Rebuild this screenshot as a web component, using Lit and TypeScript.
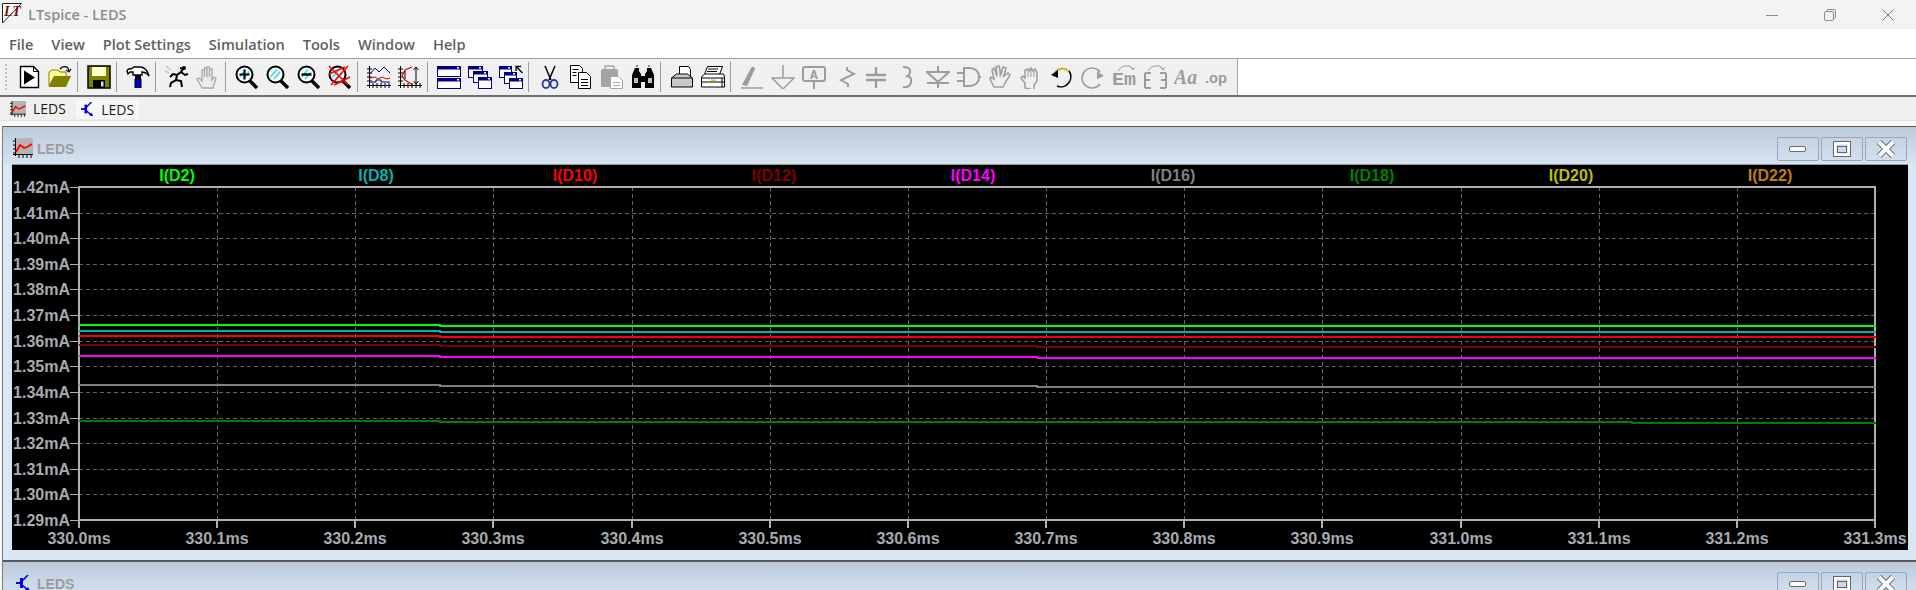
/**
 * <app-root> — LTspice main window with the LEDS waveform viewer.
 */

import { LitElement, html, svg, css } from "lit";
import { customElement } from "lit/decorators.js";

/* ── Plot data ───────────────────────────────────────────────────────── */

const PLOT = { left: 79, right: 1875, top: 187, bottom: 520 };
const Y_LABELS = ["1.42", "1.41", "1.40", "1.39", "1.38", "1.37", "1.36", "1.35", "1.34", "1.33", "1.32", "1.31", "1.30", "1.29"];
const X_LABELS = ["330.0", "330.1", "330.2", "330.3", "330.4", "330.5", "330.6", "330.7", "330.8", "330.9", "331.0", "331.1", "331.2", "331.3"];

// [x where the step happens, y after it], starting from the y at the left edge
const TRACES = [
  { name: "I(D2)", x: 177, color: "#00ff00", y: 325, steps: [[440, 326]] },
  { name: "I(D8)", x: 376, color: "#00b4b4", y: 331, steps: [[440, 332]] },
  { name: "I(D10)", x: 575, color: "#ff0000", y: 336, steps: [[440, 337]] },
  { name: "I(D12)", x: 774, color: "#800000", y: 345, steps: [[440, 346], [1037, 347]] },
  { name: "I(D14)", x: 973, color: "#ff00ff", y: 356, steps: [[440, 357], [1037, 358]] },
  { name: "I(D16)", x: 1173, color: "#808080", y: 385, steps: [[440, 386], [1037, 387]] },
  { name: "I(D18)", x: 1372, color: "#008000", y: 421, steps: [[440, 422], [1632, 423]] },
  { name: "I(D20)", x: 1571, color: "#bfbf00", y: 0, steps: [] },
  { name: "I(D22)", x: 1770, color: "#bf8000", y: 0, steps: [] },
];

function tracePath(y: number, steps: number[][]): string {
  let d = `M${PLOT.left} ${y}`;
  for (const [sx, sy] of steps) d += `H${sx}V${sy}`;
  return `${d}H${PLOT.right + 1}`;
}

function xTick(i: number): number {
  return Math.round(PLOT.left + (i * (PLOT.right - PLOT.left)) / 13);
}

function yTick(i: number): number {
  return Math.round(PLOT.top + (i * (PLOT.bottom - PLOT.top)) / 13);
}

/* ── Toolbar icons ───────────────────────────────────────────────────── */

const GREY = "#9c9c9c";

function lens(inner: unknown = null) {
  return svg`
    <path d="M14 15l8 8" stroke="#000" stroke-width="3.4"/>
    <circle cx="9.5" cy="9.5" r="8" fill="#fff" stroke="#000" stroke-width="2"/>
    <path d="M4.5 12L11 4.5M8 14l6-7" stroke="#5fe0e8" stroke-width="2"/>
    ${inner}`;
}

function win(x: number, y: number, w: number, h: number) {
  return svg`
    <rect x=${x + 0.5} y=${y + 0.5} width=${w} height=${h} fill="#fff" stroke="#000080"/>
    <rect x=${x} y=${y} width=${w + 1} height="3.5" fill="#000080"/>
    <rect x=${x + w - 3} y=${y + 1} width="2" height="1.5" fill="#fff"/>`;
}

const axes = svg`
  <path d="M2.5 1v22M0 20.5h24M0 4h5M0 8h5M0 12h5M0 16h5M6 18v5M10 18v5M14 18v5M18 18v5M22 18v5" stroke="#000" fill="none"/>`;

const ICONS: Record<string, unknown> = {
  play: svg`
    <path d="M3.5 1.5h13l5 5v16h-18z" fill="#fff" stroke="#000" stroke-width="1.4"/>
    <path d="M16.5 1.5v5h5" fill="none" stroke="#000"/>
    <path d="M7 5.5l11 7-11 7z" fill="#000"/>`,
  open: svg`
    <path d="M1 21V7l3-2h6l2 2h6v5H6z" fill="#ffff90" stroke="#808000"/>
    <path d="M1 22l5-11h17l-5 11z" fill="#808000"/>
    <path d="M12 4q4-4 8-1l1 3M18 5l3 2 2-3" fill="none" stroke="#000" stroke-width="1.2"/>`,
  save: svg`
    <path d="M1 1h22v22H1z" fill="#808000" stroke="#000" stroke-width="1.5"/>
    <rect x="5" y="2" width="14" height="9" fill="#ffffc8"/>
    <rect x="6" y="15" width="12" height="8" fill="#000"/>
    <rect x="14" y="16.5" width="2.5" height="5" fill="#ddd"/>`,
  hammer: svg`
    <path d="M1 6q1-3 4-2l3-2h7q6 1 8 9-3-4-7-4v3H7V7H4L2 9z" fill="#fff" stroke="#000" stroke-width="1.4"/>
    <rect x="9" y="10" width="6" height="4" fill="#000"/>
    <rect x="9" y="14" width="6" height="9" fill="#0000c8"/>
    <path d="M9 14v9M15 14v9" stroke="#000"/>`,
  run: svg`
    <path d="M15 3l3 1-2 3-4 3-1 5-5 3-1 4M11 15l5 1 1 6M12 10l-4-1-3 3M16 7l4 3 3-1" fill="none" stroke="#000" stroke-width="2"/>
    <circle cx="19" cy="3" r="2" fill="#000"/>
    <path d="M1 1l5 4M0 6l4 2" stroke="#aaa" fill="none"/>`,
  hand: svg`
    <path d="M6 23l-5-9 2-1 3 3V5h2.5v7V3h2.5v9V2h2.5v10V4h2.5v11l2-3 2 1-3 10z" fill="#ececec" stroke="#a8a8a8" stroke-width="1.3"/>`,
  zoomIn: lens(svg`<path d="M9.5 4.5v10M4.5 9.5h10" stroke="#000" stroke-width="2"/>`),
  zoom: lens(),
  zoomOut: lens(svg`<path d="M4.5 9.5h10" stroke="#000" stroke-width="2.4"/>`),
  zoomFit: lens(svg`<path d="M1 1l19 19M20 1L3 20M1 9l16-7M6 20l16-8" stroke="#f00" stroke-width="1.6"/>`),
  plot: svg`${axes}
    <path d="M3 9l5-6 4 4 5-5 6 6" fill="none" stroke="#000080"/>
    <path d="M3 13l5-1 3 2 4-2 5 2 3-1" fill="none" stroke="#e00000"/>
    <path d="M3 17h6v-2h5v2h9" fill="none" stroke="#000080"/>`,
  plotFit: svg`${axes}
    <path d="M14 2L7 5 4 11l3 4 8 5" fill="none" stroke="#e00000" stroke-width="1.2"/>
    <path d="M18 2v17M15.5 5L18 2l2.5 3M15.5 16l2.5 3 2.5-3M7 6v8" fill="none" stroke="#000"/>`,
  tile: svg`${win(0, 1, 23, 10)}${win(0, 13, 23, 10)}`,
  cascade: svg`${win(0, 1, 14, 11)}${win(5, 6, 14, 11)}${win(10, 12, 13, 11)}`,
  cascadeUp: svg`${win(0, 1, 12, 11)}${win(5, 7, 12, 11)}${win(10, 13, 13, 10)}
    <path d="M17 6V1.5h5M17.5 2l6 6" fill="none" stroke="#000" stroke-width="1.3"/>`,
  cut: svg`
    <path d="M7 1l6 14M17 1l-6 14" stroke="#000" stroke-width="1.5"/>
    <ellipse cx="8" cy="19" rx="3.5" ry="4" fill="none" stroke="#2a3a9a" stroke-width="1.8"/>
    <ellipse cx="16" cy="19" rx="3.5" ry="4" fill="none" stroke="#2a3a9a" stroke-width="1.8"/>`,
  copy: svg`
    <path d="M1.5.5h9l3 3v14h-12z" fill="#fff" stroke="#000"/>
    <path d="M9.5 7.5h8l4 4v12h-12z" fill="#fff" stroke="#000"/>
    <path d="M3.5 4.5h6M3.5 7.5h4M3.5 10.5h4M12 14.5h7M12 17.5h7M12 20.5h7" stroke="#000"/>`,
  paste: svg`
    <rect x="1" y="4" width="17" height="18" rx="1.5" fill="#a4a4a4"/>
    <rect x="5" y="1" width="9" height="5" rx="1" fill="none" stroke="#a4a4a4" stroke-width="1.6"/>
    <path d="M10.5 11.5h8l4 4v8h-12z" fill="#fff" stroke="#a4a4a4"/>
    <path d="M13 17.5h7M13 20.5h7" stroke="#a4a4a4"/>`,
  find: svg`
    <path d="M4 3h4v3l2 3v14H1V10zM16 3h4l3 7v13h-9V9l2-3z" fill="#000"/>
    <path d="M10 11h4v6h-4z" fill="#000"/>
    <path d="M3 13h4v5H3zM17 13h4v5h-4z" fill="#fff" opacity=".75"/>
    <path d="M5 1h2M17 1h2" stroke="#888" stroke-width="2"/>`,
  print: svg`
    <path d="M9.5 1.5h9l2 3v8h-11z" fill="#fff" stroke="#000"/>
    <path d="M1.5 13l5-4h11l5 4v9h-21z" fill="#c8c8c8" stroke="#000"/>
    <path d="M1.5 13h21" stroke="#000"/>`,
  printer: svg`
    <path d="M6.5 1.5h15l-3 8h-15z" fill="#fff" stroke="#000"/>
    <path d="M7 4h10M6 6.5h10" stroke="#000"/>
    <path d="M.5 12l3-3h19l1 3v10H.5z" fill="#fff" stroke="#000"/>
    <path d="M.5 13h23M.5 17h23M21 13v9" stroke="#000"/>
    <rect x="10" y="14.5" width="5" height="1.5" fill="#e0d040"/>`,
  wire: svg`
    <path d="M2 20L11 3q3-3 4 1l-8 17z" fill="${GREY}"/>
    <path d="M1 23h22" stroke="${GREY}" stroke-width="1.5"/>`,
  ground: svg`<path d="M12 0v13M1 13h22L12 24z" fill="none" stroke="${GREY}" stroke-width="1.5"/>`,
  label: svg`
    <rect x="1" y="2" width="22" height="14" rx="2" fill="none" stroke="${GREY}" stroke-width="2"/>
    <path d="M12 16v8" stroke="${GREY}" stroke-width="2"/>
    <text x="12" y="13.5" text-anchor="middle" font-family="Liberation Mono, monospace" font-size="13" font-weight="700" fill="${GREY}">A</text>`,
  res: svg`<path d="M14 2v3l7 4-13 6 7 4v3" fill="none" stroke="${GREY}" stroke-width="2"/>`,
  cap: svg`<path d="M12 2v8M2 10h20M2 15h20M12 15v8" fill="none" stroke="${GREY}" stroke-width="2.4"/>`,
  ind: svg`<path d="M8 2q8 0 7 5t-4 4q6 0 5 6t-8 5" fill="none" stroke="${GREY}" stroke-width="2"/>`,
  diode: svg`<path d="M12 1v6M1 7h22L12 17zM1 18h22M12 17v6" fill="none" stroke="${GREY}" stroke-width="2"/>`,
  gate: svg`<path d="M7 3h6q9 1 9 9t-9 9H7zM0 8h7M0 16h7M22 12h2" fill="none" stroke="${GREY}" stroke-width="2"/>`,
  dragHand: svg`<path d="M6 22l-4-8 1-2 3 2-2-9 2-2 3 7-1-8 3-1 2 8 2-7 3 1-2 8 4-3 2 2-5 8-2 4z" fill="none" stroke="${GREY}" stroke-width="1.5"/>
    <path d="M9 12l-2-6M12 12V5M15 12l2-6" stroke="${GREY}"/>`,
  moveHand: svg`<path d="M6 23v-5l-4-5 2-2 2 2V5l3-1 1 2 2-3 2 3 2-2 2 3v9l-3 4v5z" fill="none" stroke="${GREY}" stroke-width="1.5"/>
    <path d="M9 6v6M12 5v7M15 6v6" stroke="${GREY}"/>`,
  undo: svg`
    <path d="M5 7A10 10 0 0 1 19 6" fill="none" stroke="#c8b400" stroke-width="1.6"/>
    <path d="M19 6A10 10 0 0 1 7 21" fill="none" stroke="#000" stroke-width="1.6"/>
    <path d="M1 10l7-5v8z" fill="#000"/>`,
  redo: svg`
    <path d="M19 7A10 10 0 1 0 19 19" fill="none" stroke="${GREY}" stroke-width="1.6"/>
    <path d="M23 11l-7-5v8z" fill="${GREY}"/>`,
  rotate: svg`
    <path d="M6 6q3-5 7-5h5l3 4M19 2l2 3 2-3" fill="none" stroke="${GREY}"/>
    <text x="0" y="20" font-family="Liberation Mono, monospace" font-size="18" font-weight="700" fill="${GREY}" textLength="24" lengthAdjust="spacingAndGlyphs">Em</text>`,
  mirror: svg`
    <path d="M5 6q3-5 7-5h5l3 4M18 2l2 3 2-3" fill="none" stroke="${GREY}"/>
    <path d="M2 8h6M2 8v15M2 15h5M2 23h6M17 8h6M23 8v15M18 15h5M17 23h6" fill="none" stroke="${GREY}" stroke-width="2"/>`,
  font: svg`
    <text x="0" y="19" font-family="Liberation Serif, serif" font-size="20" font-style="italic" font-weight="700" fill="${GREY}" textLength="23" lengthAdjust="spacingAndGlyphs">Aa</text>`,
  op: svg`
    <text x="0" y="18" font-family="Liberation Sans, sans-serif" font-size="15" font-weight="700" fill="${GREY}" textLength="22" lengthAdjust="spacingAndGlyphs">.op</text>`,
};

// "|" marks a separator
const TOOLBAR = [
  "play", "open", "|", "save", "|", "hammer", "|", "run", "hand", "|",
  "zoomIn", "zoom", "zoomOut", "zoomFit", "|", "plot", "plotFit", "|",
  "tile", "cascade", "cascadeUp", "|", "cut", "copy", "paste", "find", "|",
  "print", "printer", "|", "wire", "ground", "label", "res", "cap", "ind",
  "diode", "gate", "dragHand", "moveHand", "undo", "redo", "rotate", "mirror",
  "font", "op",
];

const MENUS = ["File", "View", "Plot Settings", "Simulation", "Tools", "Window", "Help"];

function plotIcon(size: number) {
  return html`
    <svg viewBox="0 0 20 20" width=${size} height=${size}>
      <rect x="2" y="0" width="18" height="16" fill="#b4b4b4"/>
      <path d="M2.5 0v18M0 16.5h20M0 3h3M0 7h3M0 11h3M0 15h3M6 16v4M10 16v4M14 16v4M18 16v4" stroke="#000" fill="none"/>
      <path d="M3 14l4-7 4 3 3-1 5-3" fill="none" stroke="#f00" stroke-width="1.8"/>
    </svg>`;
}

function schematicIcon(height: number) {
  return html`
    <svg viewBox="0 0 14 16" width=${(height * 14) / 16} height=${height}>
      <path d="M0 8h5" stroke="#0000e0" stroke-width="2"/>
      <path d="M5.5 3v10" stroke="#0000e0" stroke-width="3"/>
      <path d="M6 6l6-6M6 10l7 6" stroke="#0000e0" stroke-width="1.6" fill="none"/>
      <path d="M14 16l-5-1 3-3z" fill="#0000e0"/>
    </svg>`;
}

/* ── Component ───────────────────────────────────────────────────────── */

@customElement("app-root")
export class AppRoot extends LitElement {
  static styles = css`
    :host {
      display: block;
      width: 100%;
      height: 590px;
      overflow: hidden;
      background: #f7f7f7;
      font-family: "Open Sans", "Liberation Sans", sans-serif;
    }

    /* Application title bar */
    .titlebar {
      display: flex;
      align-items: center;
      height: 29px;
      background: #f3f3f3;
      color: #8c8c8c;
      font-size: 14.5px;
      font-weight: 600;
    }
    .logo {
      margin: 0 6px 2px 2px;
    }
    .caption {
      margin-left: auto;
      display: flex;
      align-items: center;
      gap: 46px;
      padding-right: 22px;
    }

    /* Menu */
    .menu {
      display: flex;
      align-items: center;
      gap: 18px;
      height: 29px;
      padding-left: 9px;
      background: #fff;
      border-bottom: 1px solid #a0a0a0;
      color: #5f5f5f;
      font-size: 14.6px;
      font-weight: 600;
    }

    /* Toolbar */
    .toolbar-row {
      display: flex;
      height: 36px;
      background: #fff;
      border-bottom: 2px solid #6e6e6e;
    }
    .toolbar {
      display: flex;
      align-items: center;
      width: 1238px;
      box-sizing: border-box;
      padding-left: 13px;
      background: #f0f0f0;
      border-right: 1px solid #a8a8a8;
      position: relative;
    }
    .grip {
      position: absolute;
      left: 5px;
      top: 5px;
      bottom: 5px;
      border-left: 2px dotted #c0c0c0;
    }
    .tool {
      flex: none;
      display: flex;
      justify-content: center;
      width: 31px;
    }
    .sep {
      flex: none;
      width: 8px;
      height: 30px;
    }
    .sep::before {
      content: "";
      display: block;
      width: 1px;
      height: 30px;
      margin-left: 2px;
      background: #9a9a9a;
    }

    /* Document tabs */
    .tabs {
      display: flex;
      align-items: flex-end;
      height: 23px;
      padding-left: 8px;
      background: #efefef;
      border-bottom: 1px solid #e2e2e2;
      font-size: 14px;
      color: #1a1a1a;
    }
    .tab {
      display: flex;
      align-items: center;
      box-sizing: border-box;
    }
    .tab.active {
      gap: 7px;
      width: 67px;
      height: 23px;
      padding-left: 2px;
    }
    .tab.inactive {
      gap: 8px;
      width: 65px;
      height: 22px;
      padding-left: 5px;
      background: #f7f7f7;
      border: 1px solid #ececec;
    }
    .gap {
      height: 5px;
      background: #f9f9f9;
    }

    /* MDI child windows */
    .window {
      margin-left: 2px;
      border-top: 1px solid #5a5a5a;
      border-left: 1px solid #7c7c7c;
      background: #d9e6f4;
    }
    .win-title {
      display: flex;
      align-items: center;
      height: 37px;
      padding: 4px 9px 0 10px;
      box-sizing: border-box;
      background: linear-gradient(#bccbdb, #d6e3f1);
      color: #9c9c9c;
      font-family: "Liberation Sans", sans-serif;
      font-size: 14px;
      font-weight: 700;
    }
    .win-title span {
      margin: 3px 0 0 4px;
    }
    .win-icon {
      display: flex;
      justify-content: center;
      width: 20px;
    }
    .win-buttons {
      margin-left: auto;
      margin-top: 3px;
      display: flex;
      gap: 2px;
    }
    .win-btn {
      display: flex;
      align-items: center;
      justify-content: center;
      width: 42px;
      height: 24px;
      box-sizing: border-box;
      border: 1px solid #95a6c0;
      border-radius: 2px;
      background: linear-gradient(#c5d3e2, #d2dfee);
    }
    .plot-frame {
      padding: 0 8px 10px 9px;
      border-bottom: 1px solid #5a5a5a;
    }
    .plot {
      display: block;
      border-top: 1px solid #9a9a9a;
    }
    .plot text {
      font-family: "Liberation Sans", sans-serif;
      font-size: 16px;
      font-weight: 700;
    }
    .axis-label {
      fill: #a6abb0;
    }
  `;

  private _winButtons() {
    return html`
      <div class="win-buttons">
        <div class="win-btn">
          <svg width="18" height="8"><rect x=".5" y="1.5" width="16" height="5" rx="1.5" fill="#fff" stroke="#6a6a6a"/></svg>
        </div>
        <div class="win-btn">
          <svg width="18" height="16"><rect x="2" y="2" width="14" height="12" fill="none" stroke="#fff" stroke-width="3"/><rect x=".5" y=".5" width="17" height="15" fill="none" stroke="#666"/><rect x="4.5" y="5.5" width="9" height="6" fill="none" stroke="#666"/></svg>
        </div>
        <div class="win-btn">
          <svg width="20" height="18" viewBox="0 0 20 18">
            <path d="M3 2l14 14M17 2L3 16" stroke="#666" stroke-width="6"/>
            <path d="M3 2l14 14M17 2L3 16" stroke="#fff" stroke-width="4"/>
          </svg>
        </div>
      </div>
    `;
  }

  private _plot() {
    const { left, right, top, bottom } = PLOT;
    return html`
      <svg class="plot" width="1896" height="385" viewBox="12 165 1896 385">
        <rect x="12" y="165" width="1896" height="385" fill="#000"/>
        ${Y_LABELS.map((label, i) => {
          const y = yTick(i);
          return svg`
            ${i > 0 && i < 13
              ? svg`<path d="M${left} ${y + 0.5}H${right}" stroke="#666" stroke-dasharray="4 3"/>`
              : null}
            <path d="M70 ${y + 0.5}h9" stroke="#b0b0b0"/>
            <text class="axis-label" x="70" y=${y + 6} text-anchor="end">${label}mA</text>`;
        })}
        ${X_LABELS.map((label, i) => {
          const x = xTick(i);
          return svg`
            ${i > 0 && i < 13
              ? svg`<path d="M${x + 0.5} ${top}V${bottom}" stroke="#666" stroke-dasharray="4 3"/>`
              : null}
            <path d="M${x} ${bottom}v8" stroke="#b0b0b0" stroke-width="2"/>
            <text class="axis-label" x=${x} y="544" text-anchor="middle">${label}ms</text>`;
        })}
        <rect x=${left} y=${top} width=${right - left} height=${bottom - top} fill="none" stroke="#b0b0b0" stroke-width="2"/>
        ${TRACES.map(
          (t) => svg`
            ${t.y ? svg`<path d=${tracePath(t.y, t.steps)} fill="none" stroke=${t.color} stroke-width="2"/>` : null}
            <text x=${t.x} y="181" text-anchor="middle" fill=${t.color}>${t.name}</text>`
        )}
      </svg>
    `;
  }

  render() {
    return html`
      <div class="titlebar">
        <svg class="logo" width="20" height="21" viewBox="0 0 20 21">
          <path d="M.5 .5h19L.5 20z" fill="#fff" stroke="#222"/>
          <text x="2" y="13" font-family="Liberation Serif, serif" font-size="14" font-weight="700" font-style="italic" fill="#7a0f0f">LT</text>
        </svg>
        LTspice - LEDS
        <div class="caption">
          <svg width="12" height="12"><path d="M0 6.5h12" stroke="#8a8a8a"/></svg>
          <svg width="12" height="12"><path d="M3 2.5V1.5q0-1 1-1h6q1.5 0 1.5 1.5v6q0 1-1 1h-1" fill="none" stroke="#8a8a8a"/><rect x=".5" y="2.5" width="9" height="9" rx="1.5" fill="none" stroke="#8a8a8a"/></svg>
          <svg width="12" height="12"><path d="M.5 .5l11 11M11.5 .5l-11 11" stroke="#7a7a7a"/></svg>
        </div>
      </div>

      <div class="menu">${MENUS.map((m) => html`<span>${m}</span>`)}</div>

      <div class="toolbar-row">
        <div class="toolbar">
          <div class="grip"></div>
          ${TOOLBAR.map((name) =>
            name === "|"
              ? html`<div class="sep"></div>`
              : html`<div class="tool">
                  <svg viewBox="0 0 24 24" width="24" height="24">${ICONS[name]}</svg>
                </div>`
          )}
        </div>
      </div>

      <div class="tabs">
        <div class="tab active">${plotIcon(16)}<span>LEDS</span></div>
        <div class="tab inactive">${schematicIcon(14)}<span>LEDS</span></div>
      </div>
      <div class="gap"></div>

      <div class="window">
        <div class="win-title">
          <div class="win-icon">${plotIcon(20)}</div>
          <span>LEDS</span>
          ${this._winButtons()}
        </div>
        <div class="plot-frame">${this._plot()}</div>
      </div>

      <div class="window">
        <div class="win-title">
          <div class="win-icon">${schematicIcon(16)}</div>
          <span>LEDS</span>
          ${this._winButtons()}
        </div>
      </div>
    `;
  }
}

declare global {
  interface HTMLElementTagNameMap {
    "app-root": AppRoot;
  }
}
